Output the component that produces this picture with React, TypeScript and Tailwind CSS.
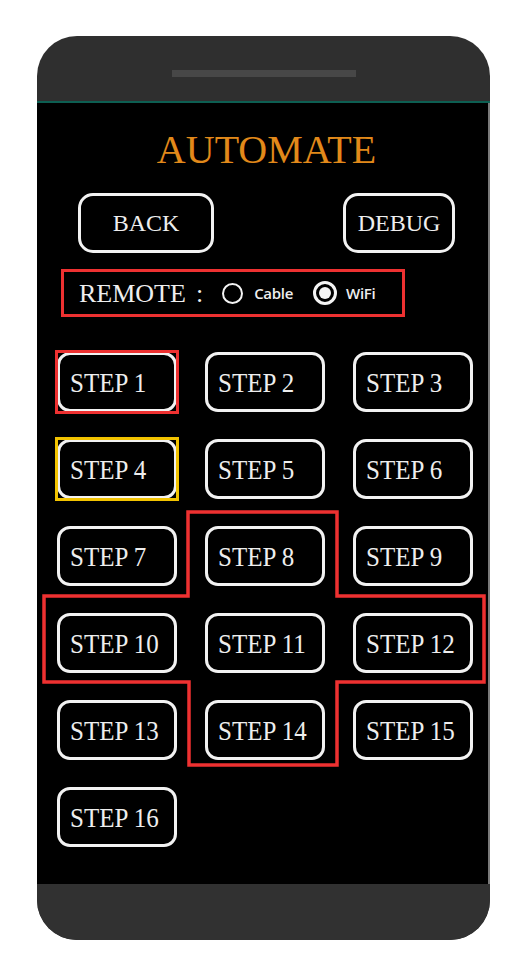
const serif = "font-['Liberation_Serif','Times_New_Roman',serif]";

const steps = Array.from({ length: 16 }, (_, i) => i + 1);

function StepButton({ n }: { n: number }) {
  const mark =
    n === 1 ? "border-[#ee3131]" : n === 4 ? "border-[#f2c300]" : "";

  return (
    <div className="relative h-[60px] w-[120px]">
      <button
        className={`${serif} flex h-full w-full items-center rounded-[13px] border-[3px] border-[#f2f2f2] bg-black pl-[10px] text-left text-[25px] leading-none text-[#eeeeee]`}
      >
        <span className="inline-block scale-y-[1.08]">STEP {n}</span>
      </button>
      {mark && (
        <div
          className={`pointer-events-none absolute -inset-[2px] border-[3px] ${mark}`}
        />
      )}
    </div>
  );
}

function Radio({ label, checked }: { label: string; checked?: boolean }) {
  return (
    <label className="flex items-center">
      {checked ? (
        <span className="flex h-[24px] w-[24px] items-center justify-center rounded-full border-[3px] border-[#f4f4f4]">
          <span className="h-[12px] w-[12px] rounded-full bg-[#f4f4f4]" />
        </span>
      ) : (
        <span className="h-[21px] w-[21px] rounded-full border-[2.5px] border-[#f4f4f4]" />
      )}
      <span
        className={`font-['Open_Sans',sans-serif] text-[15px] font-semibold tracking-[-0.3px] text-[#eeeeee] ${
          checked ? "ml-[9px]" : "ml-[11px]"
        }`}
      >
        {label}
      </span>
    </label>
  );
}

export default function App() {
  return (
    <div className="h-[971px] w-[532px] bg-white pt-[36px] pl-[37px]">
      <div className="flex w-[453px] flex-col overflow-hidden rounded-[40px] bg-[#2f2f2f]">
        {/* top bezel */}
        <div className="flex h-[65px] justify-center pt-[34px]">
          <div className="h-[7px] w-[184px] bg-[#474747]" />
        </div>
        <div className="h-[2px] bg-[#0d5f52]" />

        {/* screen */}
        <div className="relative h-[781px] border-r-[2px] border-[#7a7a7a] bg-black">
          <h1
            className={`${serif} mt-[23px] pl-[8px] text-center text-[40px] leading-[48px] text-[#e2891a]`}
          >
            AUTOMATE
          </h1>

          <div className="mt-[19px] flex justify-between pl-[41px] pr-[33px]">
            <button
              className={`${serif} h-[60px] w-[136px] rounded-[15px] border-[3px] border-[#f2f2f2] text-[24px] text-[#eeeeee]`}
            >
              BACK
            </button>
            <button
              className={`${serif} h-[60px] w-[112px] rounded-[15px] border-[3px] border-[#f2f2f2] text-[24px] text-[#eeeeee]`}
            >
              DEBUG
            </button>
          </div>

          <div className="ml-[24px] mt-[16px] flex h-[48px] w-[344px] items-center border-[3px] border-[#ee3131] pl-[15px]">
            <span className={`${serif} text-[26px] text-[#eeeeee]`}>REMOTE</span>
            <span className={`${serif} ml-[10px] mr-[19px] text-[26px] text-[#eeeeee]`}>
              :
            </span>
            <div className="flex items-center gap-[20px]">
              <Radio label="Cable" />
              <Radio label="WiFi" checked />
            </div>
          </div>

          <div className="ml-[20px] mt-[35px] grid w-[416px] grid-cols-3 gap-x-[28px] gap-y-[27px]">
            {steps.map((n) => (
              <StepButton key={n} n={n} />
            ))}
          </div>

          {/* annotation outline around steps 8, 10-12, 14 */}
          <svg
            className="pointer-events-none absolute left-0 top-0"
            width="453"
            height="781"
          >
            <polygon
              points="151,409 300,409 300,493 447,493 447,579 300,579 300,662 152,662 152,579 7,579 7,493 151,493"
              fill="none"
              stroke="#ee3131"
              strokeWidth="3.5"
            />
          </svg>
        </div>

        {/* bottom bezel */}
        <div className="h-[56px] bg-[#313131]" />
      </div>
    </div>
  );
}
